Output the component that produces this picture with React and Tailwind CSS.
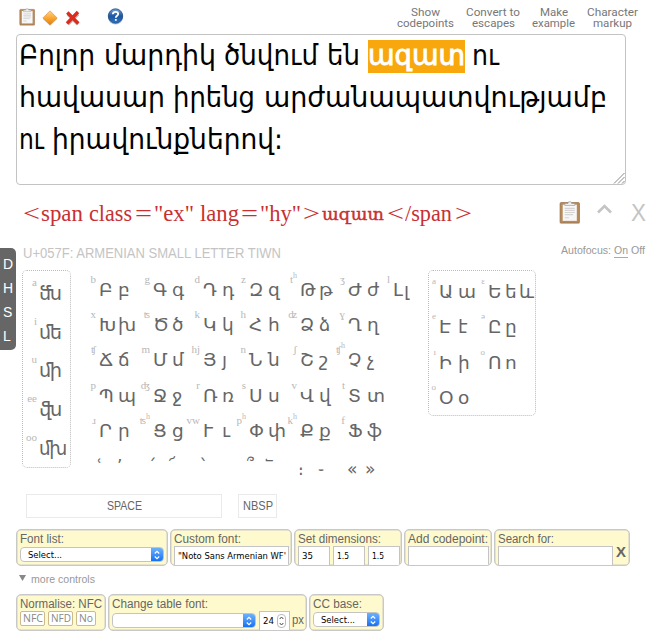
import React, { useLayoutEffect, useRef } from "react";

const ARM = "font-['DejaVu_Sans',sans-serif]";
const SANS = "font-['Liberation_Sans',sans-serif]";
const SERIF = "font-['Liberation_Serif','DejaVu_Serif',serif]";

/* Text that is stretched or condensed to fill the width of its box. */
function Fit({ className = "", children }) {
  const ref = useRef(null);
  useLayoutEffect(() => {
    const inner = ref.current;
    const natural = inner.getBoundingClientRect().width;
    const wanted = inner.parentElement.clientWidth;
    if (natural > 0) inner.style.transform = `scaleX(${wanted / natural})`;
  }, []);
  return (
    <span className={`flex shrink-0 whitespace-nowrap ${className}`}>
      <span ref={ref} className="inline-block shrink-0 origin-left">{children}</span>
    </span>
  );
}

function Clipboard({ className }) {
  return (
    <svg className={className} viewBox="0 0 20 22">
      <rect x="0.5" y="20" width="19.5" height="2" rx="1" fill="#ddd" />
      <rect x="1" y="1.5" width="18.5" height="19.5" rx="1" fill="#b98a5a" stroke="#94704c" strokeWidth=".7" />
      <rect x="3.5" y="3.5" width="13.5" height="15.5" fill="#f7f7f7" />
      <path d="M5.5 7h9.5M5.5 9h9.5M5.5 11h9.5M5.5 13h8M5.5 16h4" stroke="#d4d4d4" strokeWidth="1.1" />
      <path d="M5.5 4.3V2.4h3L9 .8h2.5l.6 1.6h3v1.9z" fill="#eee" stroke="#999" strokeWidth=".6" />
    </svg>
  );
}

function Diamond() {
  return (
    <svg className="ml-[7px] mt-[2px] h-[16px] w-[16px]" viewBox="0 0 16 16">
      <defs>
        <linearGradient id="dg" x1="0" y1="0" x2="0" y2="1">
          <stop offset="0" stopColor="#ffd28a" />
          <stop offset=".5" stopColor="#fba733" />
          <stop offset="1" stopColor="#e07c0c" />
        </linearGradient>
      </defs>
      <path d="M8 1.6 15.2 9 8 15.8.8 9z" fill="#ccc" />
      <path d="M8 .8 15.2 8 8 15 .8 8z" fill="url(#dg)" stroke="#dd9138" strokeWidth=".6" />
    </svg>
  );
}

function Help() {
  return (
    <svg className="ml-[26px] h-[17px] w-[17px]" viewBox="0 0 17 17">
      <defs>
        <linearGradient id="hg" x1="0" y1="0" x2="0" y2="1">
          <stop offset="0" stopColor="#7ba4d6" />
          <stop offset=".5" stopColor="#1d55a0" />
          <stop offset="1" stopColor="#2c73c4" />
        </linearGradient>
      </defs>
      <circle cx="8.5" cy="9" r="7.6" fill="#b9c3d0" />
      <circle cx="8.5" cy="8" r="7.2" fill="url(#hg)" stroke="#1a4884" strokeWidth=".8" />
      <path d="M5.8 6.2Q6 3.8 8.6 3.8q2.6 0 2.6 2.1c0 1.8-2.4 1.9-2.4 3.8M8.8 11v1.8" fill="none" stroke="#fff" strokeWidth="1.8" />
    </svg>
  );
}

function Link({ a, b, aw, bw, className }) {
  return (
    <div className={`flex shrink-0 flex-col items-center ${className}`}>
      <Fit className={aw}>{a}</Fit>
      <Fit className={bw}>{b}</Fit>
    </div>
  );
}

const line = `flex h-[42px] text-[28px] leading-[42px] text-black ${ARM}`;

const tag = [
  ["<", "w-[17px]"],
  ["span", "w-[42px] ml-[1px]"],
  ["class", "w-[43px] ml-[6px]"],
  ["=", "w-[17px] ml-[3px]"],
  ['"ex"', "w-[40px] ml-[2px]"],
  ["lang", "w-[39px] ml-[6px]"],
  ["=", "w-[17px] ml-[2px]"],
  ['"hy"', "w-[41px] ml-[2px]"],
  [">", "w-[17px] ml-[2px]"],
  ["ազատ", "w-[62px] ml-[2px] pt-[1px] text-[16px] [-webkit-text-stroke:0.4px] font-['DejaVu_Serif',serif]"],
  ["<", "w-[17px] ml-[3px]"],
  ["/span", "w-[47px] ml-[1px]"],
  [">", "w-[17px] ml-[3px]"],
];

const rows = [
  ["b Բ բ", "g Գ գ", "d Դ դ", "z Զ զ", "t^ Թ թ", "ʒ Ժ ժ", "l Լ լ"],
  ["x Խ խ", "ʦ Ծ ծ", "k Կ կ", "h Հ հ", "ʣ Ձ ձ", "ɣ Ղ ղ"],
  ["ʧ Ճ ճ", "m Մ մ", "hj Յ յ", "n Ն ն", "ʃ Շ շ", "ʧ^ Չ չ"],
  ["p Պ պ", "ʤ Ջ ջ", "r Ռ ռ", "s Ս ս", "v Վ վ", "t Տ տ"],
  ["ɹ Ր ր", "ʦ^ Ց ց", "vw Ւ ւ", "p^ Փ փ", "k^ Ք ք", "f Ֆ ֆ"],
];

const vowels = [
  ["a Ա ա", "ɛ Ե ե և"],
  ["e Է է", "ə Ը ը"],
  ["ı Ի ի", "o Ո ո"],
  ["o Օ օ"],
];

function Label({ t, className = "" }) {
  return (
    <span className={`flex w-[16px] shrink-0 justify-end pr-[2px] leading-[12px] text-[#b8b8b8] font-['Liberation_Serif','DejaVu_Serif',serif] ${className}`}>
      <span>{t.replace("^", "")}</span>
      {t.includes("^") && <span className="-mt-[3px] text-[8px]">h</span>}
    </span>
  );
}

function Cell({ v, narrow }) {
  const [l, up, lo, extra] = v.split(" ");
  const gap = l === "l" ? "w-[11px]" : narrow === 2 ? "w-[17px]" : "w-[19px]";
  return (
    <div className="flex">
      <Label t={l} className={narrow ? "text-[9px]" : "text-[11px]"} />
      <span className="flex pt-[6px] pl-[1px] text-[18.5px] leading-[22px]">
        <span className={gap}>{up}</span>
        <span className={extra ? "w-[14px]" : ""}>{lo}</span>
        {extra && <span>{extra}</span>}
      </span>
    </div>
  );
}

function Group({ label, lw, className, children }) {
  return (
    <div className={`h-[37px] shrink-0 overflow-hidden rounded-[5px] border border-[#c8c8c8] bg-[#fffacd] pl-[3px] text-[12px] leading-[14px] shadow-[inset_0_0_0_.5px_#ccc] ${className}`}>
      <div className="flex h-[16px] pt-[2px]"><Fit className={lw}>{label}</Fit></div>
      {children}
    </div>
  );
}

function Select({ text, className }) {
  return (
    <div className={`flex h-[15px] shrink-0 overflow-hidden rounded-[4px] border border-[#c4c4c4] bg-white ${className}`}>
      <div className={`flex flex-1 pl-[7px] text-[9px] leading-[14px] text-black ${ARM}`}>
        {text && <Fit className="w-[34px]">{text}</Fit>}
      </div>
      <div className="flex w-[12px] items-center justify-center bg-linear-to-b from-[#6bb1fb] to-[#1470f4]">
        <svg className="h-[10px] w-[6px]" viewBox="0 0 6 10" fill="none" stroke="white" strokeWidth="1.2">
          <path d="M.8 3.5 3 1.3l2.2 2.2M.8 6.5 3 8.7l2.2-2.2" />
        </svg>
      </div>
    </div>
  );
}

function Input({ className, children }) {
  return (
    <div className={`flex h-[20px] shrink-0 border border-[#c4c4c4] bg-white pl-[3px] text-[9px] leading-[18px] text-black ${ARM} ${className}`}>
      {children}
    </div>
  );
}

export default function App() {
  return (
    <div className={`relative h-[639px] w-[647px] overflow-hidden bg-white text-[#666] ${SANS}`}>
      {/* toolbar */}
      <header className="flex h-[34px] pl-[19px] pt-[8px]">
        <Clipboard className="h-[18px] w-[16px]" />
        <Diamond />
        <svg className="ml-[7px] mt-[2px] h-[16px] w-[16px]" viewBox="0 0 16 16">
          <path d="M3 4.3 13 14.3M13 4 3 14" stroke="#bbb" strokeWidth="3.4" />
          <path d="m2.3 2.5 11 11M13 2 2 13.5" stroke="#dc2c1c" strokeWidth="3.4" />
        </svg>
        <Help />
        <div className="ml-[273px] -mt-[1px] flex text-[11px] leading-[11px] text-[#777] font-['Roboto',sans-serif]">
          <Link a="Show" b="codepoints" aw="w-[29px]" bw="w-[57px]" className="w-[57px]" />
          <Link a="Convert to" b="escapes" aw="w-[54px]" bw="w-[43px]" className="ml-[12px] w-[54px]" />
          <Link a="Make" b="example" aw="w-[28px]" bw="w-[43px]" className="ml-[12px] w-[43px]" />
          <Link a="Character" b="markup" aw="w-[51px]" bw="w-[39px]" className="ml-[12px] w-[51px]" />
        </div>
      </header>

      {/* text area */}
      <section className="relative ml-[16px] h-[151px] w-[610px] rounded-[4px] border border-[#c3c3c3] pl-[2px]">
        <div className={line}>
          <Fit className="w-[76px]">Բոլոր</Fit>
          <Fit className="ml-[9px] w-[112px]">մարդիկ</Fit>
          <Fit className="ml-[8px] w-[94px]">ծնվում</Fit>
          <Fit className="ml-[9px] w-[33px]">են</Fit>
          <div className="ml-[8px] mt-[5px] h-[33px] bg-[#f8a80c] text-white">
            <Fit className="w-[97px] leading-[32px] [-webkit-text-stroke:0.9px_white]">ազատ</Fit>
          </div>
          <Fit className="ml-[7px] w-[27px]">ու</Fit>
        </div>
        <div className={line}>
          <Fit className="w-[146px]">հավասար</Fit>
          <Fit className="ml-[8px] w-[82px]">իրենց</Fit>
          <Fit className="ml-[9px] w-[343px]">արժանապատվությամբ</Fit>
        </div>
        <div className={line}>
          <Fit className="w-[25px]">ու</Fit>
          <Fit className="ml-[8px] w-[231px]">իրավունքներով:</Fit>
        </div>
        <svg className="absolute bottom-0 right-0 h-[12px] w-[12px]" viewBox="0 0 12 12" stroke="#888">
          <path d="M1 11.5 11.5 1M5 11.5 11.5 5M9 11.5 11.5 9" />
        </svg>
      </section>

      {/* generated markup */}
      <section className="flex h-[55px] pl-[23px]">
        <div className={`flex w-[536px] pt-[15px] text-[23px] leading-[28px] text-[#c83030] ${SERIF}`}>
          {tag.map(([t, c], i) => <Fit key={i} className={c}>{t}</Fit>)}
        </div>
        <Clipboard className="mt-[16px] h-[23px] w-[21px]" />
        <svg className="ml-[17px] mt-[19px] h-[10px] w-[15px]" viewBox="0 0 15 10" fill="none" stroke="#c4c4c4" strokeWidth="2.6">
          <path d="M1 8.5 7.5 2 14 8.5" />
        </svg>
        <Fit className="ml-[19px] mt-[14px] w-[15px] text-[24px] leading-[28px] text-[#c4c4c4]">X</Fit>
      </section>

      {/* character name */}
      <section className="flex h-[30px] pl-[23px]">
        <Fit className="w-[258px] pt-[5px] text-[14px] leading-[16px] text-[#c4c4c4]">U+057F: ARMENIAN SMALL LETTER TIWN</Fit>
        <div className="ml-[280px] flex pt-[3px] text-[11px] leading-[14px] text-[#999]">
          <Fit className="w-[50px]">Autofocus:</Fit>
          <Fit className="ml-[3px] h-[15px] w-[14px] border-b border-[#aaa]">On</Fit>
          <Fit className="ml-[3px] w-[14px]">Off</Fit>
        </div>
      </section>

      {/* character picker */}
      <section className={`flex h-[224px] pl-[22px] text-[#666] ${ARM}`}>
        <div className="flex h-[198px] w-[49px] flex-col rounded-[5px] border border-dotted border-[#bbb] pt-[5px]">
          {["a ﬓ", "i ﬔ", "u ﬕ", "ee ﬖ", "oo ﬗ"].map((s) => {
            const [l, g] = s.split(" ");
            return (
              <div key={s} className="flex h-[38.7px] shrink-0">
                <Label t={l} className="w-[14px] text-[11px]" />
                <Fit className={`pt-[6px] text-[19px] leading-[22px] ${l === "oo" ? "w-[28px]" : "w-[23px]"}`}>{g}</Fit>
              </div>
            );
          })}
        </div>
        <div className="ml-[11px] w-[346px] pt-[3px]">
          {rows.map((r, i) => (
            <div key={i} className="grid h-[35.2px] grid-cols-[54px_50px_46px_51px_48px_45px_36px]">
              {r.map((v) => <Cell key={v} v={v} />)}
            </div>
          ))}
          <div className="grid h-[30px] grid-cols-[54px_50px_46px_51px_48px_60px] pt-[6px] pl-[15px] text-[17px] leading-[22px]">
            <div className="flex"><span className="w-[20px]">ՙ</span><span>՚</span></div>
            <div className="flex"><span className="w-[18px]">՛</span><span>՜</span></div>
            <div>՝</div>
            <div className="flex"><span className="w-[18px]">՞</span><span>՟</span></div>
            <div className="flex pt-[3px]"><span className="w-[20px]">։</span><span>֊</span></div>
            <div className="flex pt-[3px] pl-[1px]"><span className="w-[18px]">«</span><span>»</span></div>
          </div>
        </div>
        <div className="h-[146px] w-[108px] rounded-[5px] border border-dotted border-[#bbb] pt-[4px]">
          {vowels.map((r, i) => (
            <div key={i} className="-ml-[7px] grid h-[35.3px] grid-cols-[49px_66px]">
              {r.map((v, j) => <Cell key={v} v={v} narrow={j + 1} />)}
            </div>
          ))}
        </div>
      </section>

      <section className="flex h-[35px] pl-[26px] text-[12px] leading-[22px]">
        <div className="flex h-[24px] w-[196px] justify-center border border-[#eaeaea]"><Fit className="w-[35px]">SPACE</Fit></div>
        <div className="ml-[16px] flex h-[24px] w-[39px] justify-center border border-[#eaeaea]"><Fit className="w-[30px]">NBSP</Fit></div>
      </section>

      {/* controls */}
      <section className="flex h-[37px] gap-[2px] pl-[16px]">
        <Group label="Font list:" lw="w-[44px]" className="w-[152px]">
          <Select text="Select..." className="mt-[1px] w-[144px]" />
        </Group>
        <Group label="Custom font:" lw="w-[67px]" className="w-[122px]">
          <Input className="w-[115px]"><Fit className="w-[108px]">"Noto Sans Armenian WF'</Fit></Input>
        </Group>
        <Group label="Set dimensions:" lw="w-[83px]" className="w-[108px]">
          <div className="flex gap-[3px]">
            <Input className="w-[32px]"><Fit className="w-[11px]">35</Fit></Input>
            <Input className="w-[32px]"><Fit className="w-[12px]">1.5</Fit></Input>
            <Input className="w-[32px]"><Fit className="w-[12px]">1.5</Fit></Input>
          </div>
        </Group>
        <Group label="Add codepoint:" lw="w-[80px]" className="w-[88px]">
          <Input className="w-[81px]" />
        </Group>
        <Group label="Search for:" lw="w-[56px]" className="w-[136px]">
          <div className="flex">
            <Input className="w-[115px]" />
            <Fit className="ml-[3px] -mt-[1px] w-[10px] text-[14px] leading-[14px] font-bold">X</Fit>
          </div>
        </Group>
      </section>

      <section className="flex h-[28px] pl-[19px] pt-[6px] text-[11px] leading-[14px] text-[#999]">
        <svg className="mt-[3px] h-[6px] w-[7px]" viewBox="0 0 7 6"><path d="M0 0h7L3.5 6z" fill="#888" /></svg>
        <Fit className="ml-[5px] w-[64px]">more controls</Fit>
      </section>

      <section className="flex h-[37px] gap-[2px] pl-[16px]">
        <Group label="Normalise: NFC" lw="w-[82px]" className="w-[90px]">
          <div className="flex gap-[3px] text-[10px] leading-[13px] text-[#888] font-['Open_Sans',sans-serif]">
            <div className="flex h-[15px] w-[25px] justify-center rounded-[2px] border border-[#cdb98c] bg-white"><Fit className="w-[20px]">NFC</Fit></div>
            <div className="flex h-[15px] w-[25px] justify-center rounded-[2px] border border-[#cdb98c] bg-white"><Fit className="w-[20px]">NFD</Fit></div>
            <div className="flex h-[15px] w-[20px] justify-center rounded-[2px] border border-[#cdb98c] bg-white"><Fit className="w-[14px]">No</Fit></div>
          </div>
        </Group>
        <Group label="Change table font:" lw="w-[96px]" className="w-[199px]">
          <div className="flex">
            <Select className="mt-[2px] w-[144px]" />
            <Input className="ml-[3px] w-[31px]">
              <Fit className="w-[11px]">24</Fit>
              <svg className="ml-[3px] mt-[2px] h-[14px] w-[9px]" viewBox="0 0 9 14" fill="none">
                <rect x=".5" y=".5" width="8" height="13" rx="3.5" stroke="#bbb" />
                <path d="m2.7 5 1.8-2 1.8 2M2.7 9l1.8 2 1.8-2" stroke="#444" />
              </svg>
            </Input>
            <Fit className="ml-[2px] w-[12px] pt-[2px]">px</Fit>
          </div>
        </Group>
        <Group label="CC base:" lw="w-[49px]" className="w-[75px]">
          <Select text="Select..." className="mt-[1px] w-[67px]" />
        </Group>
      </section>

      {/* docked side menu, over the page */}
      <nav className="absolute left-0 top-[248px] flex h-[102px] w-[16px] flex-col rounded-r-[5px] bg-[#666] pl-[3px] pt-[4px] text-[14px] leading-[24px] text-white">
        <span>D</span><span>H</span><span>S</span><span>L</span>
      </nav>
    </div>
  );
}
